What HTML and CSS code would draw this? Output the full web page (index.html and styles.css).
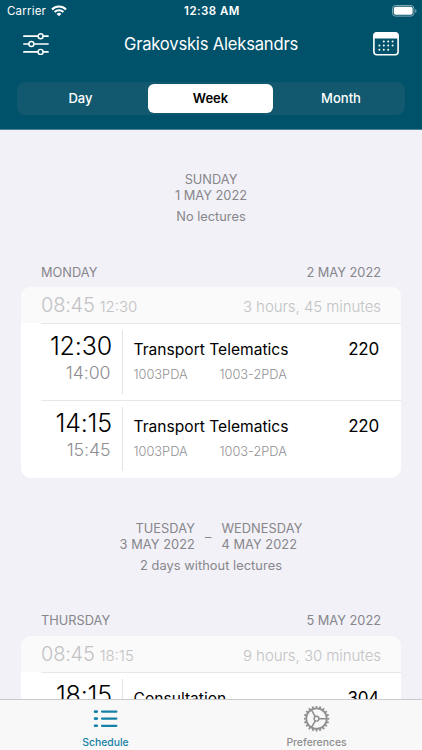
FILE: index.html
```
<!DOCTYPE html>
<html lang="en">
<head>
<meta charset="utf-8">
<title>Schedule</title>
<link rel="stylesheet" href="styles.css">
</head>
<body>
<div class="app">
  <header class="header">
    <div class="status">
      <div class="carrier"><span>Carrier</span>
        <svg width="16" height="12" viewBox="0 0 16 12" fill="none" stroke="#fff" stroke-width="2.1"><path d="M1 4.4A10 10 0 0 1 15 4.4M3.6 7.1A6.3 6.3 0 0 1 12.4 7.1"/><path d="M8 11.3 5.6 8.9A3.4 3.4 0 0 1 10.4 8.9Z" fill="#fff" stroke="none"/></svg>
      </div>
      <span class="clock">12:38 AM</span>
      <svg class="battery" width="25" height="12" viewBox="0 0 25 12"><rect x=".5" y=".5" width="21.4" height="10.6" rx="3" fill="none" stroke="#7fa8b5"/><rect x="1.8" y="1.8" width="18.8" height="8" rx="1.8" fill="#fff"/><path d="M23.2 4v3.8q1.3-.5 1.3-1.9T23.2 4Z" fill="#7fa8b5"/></svg>
    </div>
    <div class="nav">
      <svg width="26" height="24" viewBox="0 0 26 24" fill="none" stroke="#fff" stroke-width="1.7" stroke-linecap="round"><path d="M.9 4.2H15M20.2 4.2H25M.9 12H5.8M11 12H25M.9 19.9H15M20.2 19.9H25"/><g stroke-width="1.4"><circle cx="17.6" cy="4.2" r="2.5"/><circle cx="8.4" cy="12" r="2.5"/><circle cx="17.6" cy="19.9" r="2.5"/></g></svg>
      <h1 class="title">Grakovskis Aleksandrs</h1>
      <svg width="26" height="24" viewBox="0 0 26 24"><rect x=".9" y="1" width="24.2" height="21.8" rx="3" fill="none" stroke="#fff" stroke-width="1.6"/><path d="M.3 6.4V3.5Q.3 0 3.8 0H22Q25.7 0 25.7 3.5V6.4Z" fill="#fff"/><path d="M10.8 9.5h.01M15.2 9.5h.01M19.6 9.5h.01M6.4 13.5h.01M10.8 13.5h.01M15.2 13.5h.01M19.6 13.5h.01M6.4 17.7h.01M10.8 17.7h.01M15.2 17.7h.01" stroke="#fff" stroke-width="2" stroke-linecap="round"/></svg>
    </div>
    <div class="segments">
      <div class="segment day-option">Day</div>
      <div class="segment selected">Week</div>
      <div class="segment month-option">Month</div>
    </div>
  </header>

  <main class="content">
    <section class="empty first">
      <p class="caps">SUNDAY</p>
      <p class="caps">1 MAY 2022</p>
      <p class="note">No lectures</p>
    </section>

    <section class="day">
      <div class="day-head caps"><span>MONDAY</span><span>2 MAY 2022</span></div>
      <div class="card">
        <div class="summary"><span class="from">08:45</span><span class="to">12:30</span><span class="length">3 hours, 45 minutes</span></div>
        <div class="lecture">
          <div class="times"><span class="start">12:30</span><span class="end">14:00</span></div>
          <div class="info">
            <div class="row"><span class="name">Transport Telematics</span><span class="room">220</span></div>
            <div class="groups"><span>1003PDA</span><span>1003-2PDA</span></div>
          </div>
        </div>
        <div class="lecture">
          <div class="times"><span class="start">14:15</span><span class="end">15:45</span></div>
          <div class="info">
            <div class="row"><span class="name">Transport Telematics</span><span class="room">220</span></div>
            <div class="groups"><span>1003PDA</span><span>1003-2PDA</span></div>
          </div>
        </div>
      </div>
    </section>

    <section class="empty range">
      <div class="span caps">
        <div class="left"><p>TUESDAY</p><p>3 MAY 2022</p></div>
        <span class="dash">–</span>
        <div class="right"><p>WEDNESDAY</p><p>4 MAY 2022</p></div>
      </div>
      <p class="note">2 days without lectures</p>
    </section>

    <section class="day">
      <div class="day-head caps"><span>THURSDAY</span><span>5 MAY 2022</span></div>
      <div class="card">
        <div class="summary"><span class="from">08:45</span><span class="to">18:15</span><span class="length">9 hours, 30 minutes</span></div>
        <div class="lecture">
          <div class="times"><span class="start">18:15</span></div>
          <div class="info">
            <div class="row"><span class="name">Consultation</span><span class="room">304</span></div>
          </div>
        </div>
      </div>
    </section>
  </main>

  <nav class="tabs">
    <div class="tab active">
      <svg width="26" height="26" viewBox="0 0 26 26" fill="none" stroke="currentColor" stroke-width="2.2" stroke-linecap="round"><path d="M2 5.6h1.8M2 12.6h1.8M2 19.8h1.8" stroke-width="2.6"/><path d="M9 5.6h14.4M9 12.6h14.4M9 19.8h14.4"/></svg>
      <span>Schedule</span>
    </div>
    <div class="tab">
      <svg width="26" height="26" viewBox="0 0 26 26" fill="none" stroke="currentColor"><circle cx="12.5" cy="12.7" r="10.3" stroke-width="1.8"/><circle cx="12.5" cy="12.7" r="11.9" stroke-width="1.8" pathLength="40" stroke-dasharray="1 1" stroke-dashoffset=".5"/><circle cx="12.5" cy="12.7" r="2.4" stroke-width="1.4"/><path d="M14.9 12.7H22.5M11.3 10.6 7.4 3.9M11.3 14.8 7.4 21.5" stroke-width="1.5"/></svg>
      <span>Preferences</span>
    </div>
  </nav>
</div>
</body>
</html>
```
FILE: styles.css
```
* { box-sizing: border-box; }
body { margin: 0; font-family: Inter, "Liberation Sans", sans-serif; color: #000; }
p, h1 { margin: 0; }
svg { display: block; flex: none; }
.app { width: 422px; height: 750px; display: flex; flex-direction: column; overflow: hidden; background: #f2f1f7; }

.header { flex: none; height: 130px; background: #00526a; color: #fff; border-bottom: 1px solid #4b8496; }
.status { height: 22px; display: grid; grid-template-columns: 1fr auto 1fr; align-items: center; padding: 0 5px 0 7px; font-size: 11.5px; }
.carrier { display: flex; align-items: center; gap: 5px; letter-spacing: .2px; }
.clock { font-weight: 600; letter-spacing: .45px; }
.battery { justify-self: end; }
.nav { height: 43px; display: flex; align-items: center; justify-content: space-between; padding: 0 23px; }
.title { font-size: 16.6px; font-weight: 400; letter-spacing: -.2px; }
.segments { height: 33px; margin: 17px 17px 0; padding: 2px; display: grid; grid-template-columns: 127px 125px 1fr; column-gap: 2px; border-radius: 8px; background: #12596f; font-size: 13px; font-weight: 500; }
.segment { display: flex; align-items: center; justify-content: center; line-height: 16px; padding-bottom: 1px; }
.day-option { padding-right: 4px; }
.month-option { padding-left: 4px; }
.selected { background: #fff; color: #000; border-radius: 6px; font-weight: 600; }

.content { flex: 1; min-height: 0; overflow: hidden; }
.caps { font-size: 12.8px; line-height: 16px; color: #86868b; }
.note { font-size: 12.8px; line-height: 16px; margin-top: 5px; color: #86868b; }
.empty { text-align: center; }
.first { padding-top: 42px; height: 134px; }
.range { padding-top: 42.5px; height: 134.5px; }
.range .note { letter-spacing: .06px; }
.span { display: flex; justify-content: center; align-items: center; gap: 10px; letter-spacing: .06px; }
.left { text-align: right; }
.right { text-align: left; }
.day-head { height: 23px; padding: 1px 41px 0; display: flex; justify-content: space-between; }
.range + .day .day-head { padding-top: 0; }
.card { margin: 0 21px; background: #fff; border-radius: 10px; overflow: hidden; }
.summary { height: 36px; padding: 0 20px; display: flex; align-items: baseline; line-height: 36px; background: #fafafa; color: #c2c2c5; font-weight: 300; }
.from { font-size: 20px; letter-spacing: -.2px; }
.to { font-size: 15px; margin-left: 5px; }
.length { font-size: 15px; letter-spacing: -.05px; margin-left: auto; }
.lecture { height: 77px; margin-left: 20px; border-top: 1px solid #e7e7ea; display: flex; padding: 6px 22px 6px 0; }
.lecture:last-child { height: 78px; padding-bottom: 7px; }
.times { width: 82px; flex: none; padding-right: 10px; border-right: 1px solid #e3e3e6; display: flex; flex-direction: column; align-items: flex-end; font-weight: 300; }
.start { font-size: 25px; line-height: 32px; letter-spacing: -.15px; }
.end { font-size: 17.8px; line-height: 21px; color: #8e8e93; padding-right: 1.5px; letter-spacing: -.1px; }
.info { flex: 1; padding: 8px 0 0 10.5px; }
.row { display: flex; justify-content: space-between; line-height: 22px; }
.name { font-size: 15.6px; padding-top: 1px; }
.room { font-size: 17px; letter-spacing: -.2px; }
.groups { display: flex; margin-top: 6px; font-size: 12.8px; line-height: 16px; font-weight: 300; color: #929297; }
.groups span { width: 86px; }

.tabs { flex: none; height: 51px; display: grid; grid-template-columns: 1fr 1fr; background: #f8f8f9; border-top: 1px solid #c9c9cb; }
.tab { display: flex; flex-direction: column; align-items: center; padding-top: 6px; color: #8e8e8e; font-size: 10.4px; font-weight: 500; line-height: 14px; gap: 4px; }
.active { color: #1580a5; }
```
